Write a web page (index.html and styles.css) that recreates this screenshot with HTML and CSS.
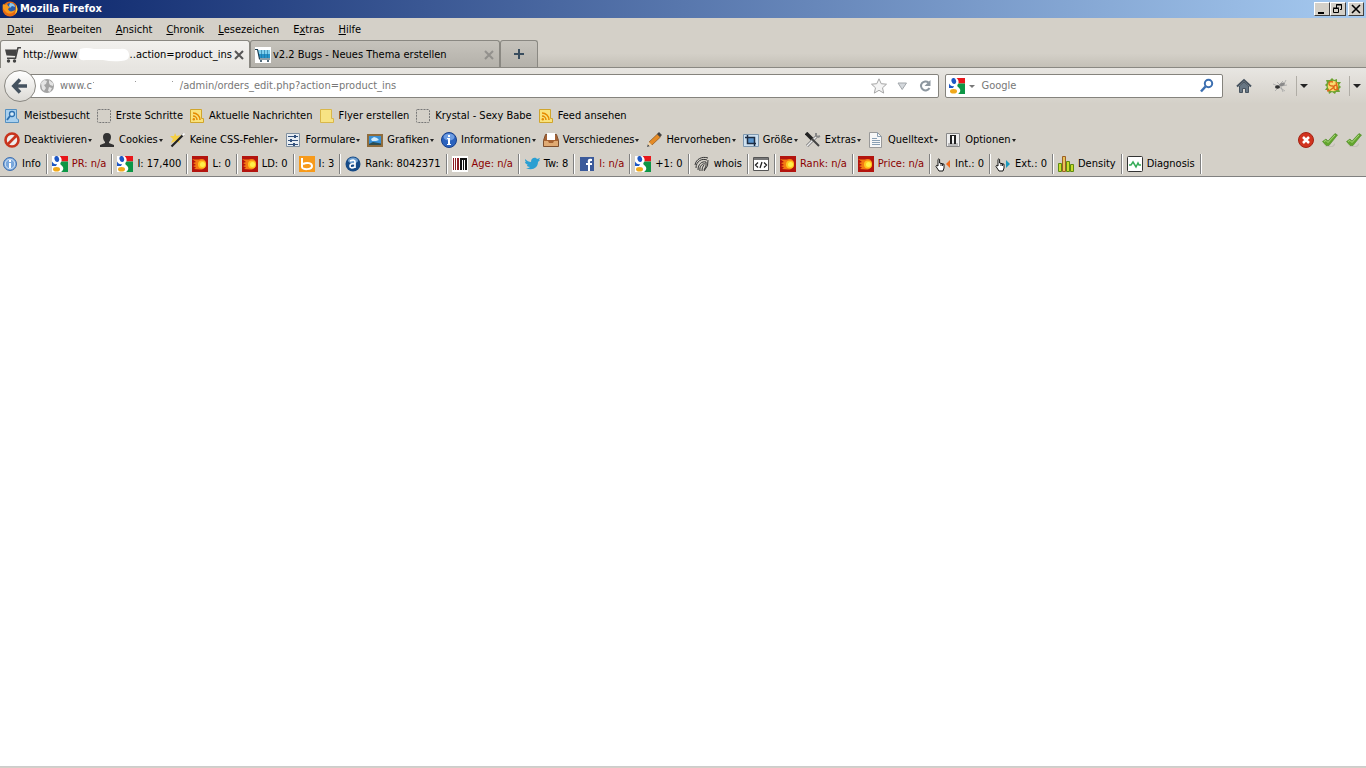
FILE: index.html
```html
<!DOCTYPE html>
<html lang="de">
<head>
  <meta charset="UTF-8">
  <title>Mozilla Firefox</title>
  <link rel="stylesheet" href="styles.css">
</head>
<body>
<!-- Icons, die mehrfach vorkommen -->
<svg class="sprite" aria-hidden="true">
  <symbol id="google" viewBox="0 0 16 16">
    <path fill="#fff" d="M0 0h16v16H0z"/>
    <path fill="#e8161a" d="M7.500 0H16v5.500H9.500C10 3 9 1 7.500 0z"/>
    <path fill="#0d9646" d="M9.500 5.500H16V16H9c3-2 3-5 0-7-1-1-1-2 .5-3.500z"/>
    <path fill="#1d57c4" d="M0 5.500C1 7.500 3 8.500 5 8L4 10H0z"/>
    <ellipse cx="4.800" cy="3" rx="2.300" ry="3" transform="rotate(-15 4.800 3)" fill="#1d57c4"/>
    <ellipse cx="4.500" cy="13.300" rx="3.500" ry="2.300" fill="#f0a91b"/>
  </symbol>
  <symbol id="comet" viewBox="0 0 16 16">
    <path fill="#b3140e" d="M0 0h16v16H0z"/>
    <path fill="#f47a12" d="M0 3q5 1 9 0c4 0 5 2 5 5s-2 6-6 5.500L2 13l2-1.500L1 10l3-1-3-2 3-1z"/>
    <circle cx="10" cy="8.500" r="4" fill="#ffc51e"/>
    <circle cx="10.500" cy="8.500" r="2.500" fill="#fff04a"/>
  </symbol>
  <symbol id="feed" viewBox="0 0 16 16">
    <path fill="#f9e27c" stroke="#d0a52c" d="M1.500 1.500h11v9h2v4h-13z"/>
    <g fill="none" stroke="#e58a00" stroke-width="1.500"><path d="M4 8a4 4 0 0 1 4 4M4 5a7 7 0 0 1 7 7"/></g>
    <circle cx="4.800" cy="11.200" r="1.200" fill="#e58a00"/>
  </symbol>
  <symbol id="blank" viewBox="0 0 16 16">
    <rect x="1.500" y="1.500" width="13" height="13" rx="1" fill="none" stroke="#777" stroke-dasharray="2 1"/>
  </symbol>
  <symbol id="check" viewBox="0 0 16 16">
    <path fill="#c3c0b8" d="M3 14h7l3-3v2l-2 2H4z"/>
    <path fill="#62a52d" stroke="#4b8a25" stroke-width=".6" d="M.5 9.500L4 7l2 2 7-7.500L15.500 3 7 13.500H4z"/>
    <path fill="none" stroke="#a9d67c" d="M2 9.500L4 8.500l2 2 7-7.500"/>
  </symbol>
  <symbol id="hand" viewBox="0 0 10 16">
    <path fill="#fff" stroke="#000" stroke-width=".9" d="M3 9V3.500q.8-1.200 1.600 0V7L9 8.200V12l-1 3H4L1 10.500Q1 8.500 3 10z"/>
    <path stroke="#000" stroke-width=".8" d="M6 7.500V10M7.500 8v2"/>
  </symbol>
</svg>

<header class="titlebar">
  <svg class="icon" viewBox="0 0 16 16">
    <circle cx="8" cy="8" r="7.500" fill="#e66a12"/>
    <circle cx="8.500" cy="7" r="5" fill="#2a5caa"/>
    <path fill="#8fc7ea" d="M8 2c3 0 5 2 5 4l-3-1-2 2-1-2z"/>
    <path fill="#f79a1e" d="M1 3l2 1 2-1 1 2 2 1-2 2c1 3 4 3 7 1-1 4-7 5-10 1C1 8 0 6 1 3z"/>
    <path fill="#ffd23a" d="M14 4c2 3 2 7-1 9l1-4z"/>
  </svg>
  <span class="caption">Mozilla Firefox</span>
  <button class="win" aria-label="Minimieren"><svg viewBox="0 0 14 12"><path d="M3 9h6v2H3z"/></svg></button>
  <button class="win" aria-label="Wiederherstellen"><svg viewBox="0 0 14 12"><path fill="none" stroke="#000" d="M5.500 5V1.500h5v5H9M5 2h6M2.500 5.500h5v4h-5zM2 5h6"/></svg></button>
  <button class="win win-close" aria-label="Schließen"><svg viewBox="0 0 14 12"><path fill="none" stroke="#000" stroke-width="1.600" d="M3 2l8 8M11 2l-8 8"/></svg></button>
</header>

<nav class="menubar">
  <button><u>D</u>atei</button>
  <button><u>B</u>earbeiten</button>
  <button><u>A</u>nsicht</button>
  <button><u>C</u>hronik</button>
  <button><u>L</u>esezeichen</button>
  <button>E<u>x</u>tras</button>
  <button><u>H</u>ilfe</button>
</nav>

<div class="tabs">
  <div class="tab active">
    <svg class="icon" viewBox="0 0 16 16"><path fill="#444" d="M0 2.500h12L10.800 9 1.500 8.500z"/><path fill="none" stroke="#444" stroke-width="1.500" d="M16 .8h-3L10.500 11.200H2"/><circle cx="3.500" cy="14" r="1.700" fill="#444"/><circle cx="9.500" cy="14" r="1.700" fill="#444"/></svg>
    <span class="tab-label">http://www<svg class="blob" viewBox="0 0 52 14"><path fill="#fff" d="M2 1q6-2 14 0h26q8-1 9 5 1 7-8 7-9 1-18-1H8Q0 13 1 8z"/></svg>..action=product_ins</span>
    <button class="close" aria-label="Tab schließen"><svg viewBox="0 0 10 10"><path d="M1 1l8 8M9 1L1 9"/></svg></button>
  </div>
  <div class="tab">
    <svg class="icon" viewBox="0 0 16 16"><path fill="#fff" d="M0 0h16v16H0z"/><path fill="#7fd0ee" d="M3 3h12v4H3z"/><path fill="#2492c9" d="M3.500 7H15v4H4.500z"/><path stroke="#1f6f9a" stroke-width=".6" d="M6.500 3v8M9.500 3v8M12.500 3v8"/><path fill="none" stroke="#1b3c50" stroke-width="1.200" d="M0 2.500h2.500L4.500 12H15"/><circle cx="6" cy="14" r="1" fill="#1b3c50"/><circle cx="13" cy="14" r="1" fill="#1b3c50"/></svg>
    <span class="tab-label">v2.2 Bugs - Neues Thema erstellen</span>
    <button class="close" aria-label="Tab schließen"><svg viewBox="0 0 10 10"><path d="M1 1l8 8M9 1L1 9"/></svg></button>
  </div>
  <button class="new-tab" aria-label="Neuer Tab"><svg viewBox="0 0 12 12"><path stroke="#394d5e" stroke-width="2" d="M6 1v10M1 6h10"/></svg></button>
</div>

<div class="navbar">
  <button class="back" aria-label="Zurück"><svg viewBox="0 0 18 16"><path fill="none" stroke="#44525f" stroke-width="3.500" d="M9 1.500L2.800 8 9 14.500M3 8h13"/></svg></button>
  <div class="field urlbar">
    <svg class="icon" viewBox="0 0 16 16"><circle cx="8" cy="8" r="7" fill="#a3a3a3"/><path fill="#e4e4e4" d="M2 5l3-3 3 1-1 3-2 1 2 3-2 3-2-2zM10 2l4 3v3l-3-1-1-2zM10 9l3 1-2 4-2-1z"/></svg>
    <input class="url" type="text" aria-label="Adresse" value="www.c                            /admin/orders_edit.php?action=product_ins">
    <svg class="marks" viewBox="0 0 90 12"><path fill="#999" d="M4 1h1v1H4zM46 0h1v1h-1zM83 0h1v1h-1z"/></svg>
    <button class="tool" aria-label="Lesezeichen setzen"><svg class="icon" viewBox="0 0 16 16"><path fill="#f4f4f4" stroke="#a5a5a5" d="M8 .8l2.200 4.900 5.300.5-4 3.600 1.200 5.300L8 12.300l-4.700 2.800 1.200-5.300-4-3.600 5.300-.5z"/></svg></button>
    <button class="tool" aria-label="Verlauf"><svg class="icon" viewBox="0 0 16 16"><path fill="#d4d8dc" stroke="#a3a8ac" d="M4 5h8.500L8.200 11.500z"/></svg></button>
    <button class="tool" aria-label="Neu laden"><svg class="icon" viewBox="0 0 16 16"><path fill="none" stroke="#8d979f" stroke-width="2" d="M11.500 4.500A4.500 4.500 0 1 0 12.500 10"/><path fill="#8d979f" d="M13.500 2v6h-6z"/></svg></button>
  </div>
  <div class="field searchbar">
    <button class="engine" aria-label="Suchmaschine"><svg class="icon"><use href="#google"/></svg><i class="arrow"></i></button>
    <input class="search" type="text" aria-label="Suche" placeholder="Google">
    <button class="tool" aria-label="Suchen"><svg class="icon" viewBox="0 0 16 16"><circle cx="9.500" cy="5.500" r="3.700" fill="none" stroke="#3c6fb0" stroke-width="2"/><path stroke="#3c6fb0" stroke-width="2.500" d="M6.500 8.500L2 13.500"/></svg></button>
  </div>
  <button class="action home" aria-label="Startseite"><svg class="icon" viewBox="0 0 16 16"><path fill="none" stroke="#46535f" stroke-width="2" d="M1 8.500L8 2l7 6.500"/><path fill="#687784" stroke="#46535f" d="M3.500 8L8 4l4.500 4v6.500h-3v-4h-3v4h-3z"/></svg></button>
  <button class="action" aria-label="Firebug"><svg class="icon" viewBox="0 0 16 16"><g stroke="#a5a5a5" fill="none" stroke-width=".8"><path d="M1 6l5 2 5-5M3 13l4-4 6 4M5 4l4 4 6-1M9 9l2 5M12 6l2-4"/></g><ellipse cx="5.500" cy="9" rx="2.500" ry="1.800" fill="#333"/><ellipse cx="10" cy="6.500" rx="3" ry="1.600" fill="#8a8a8a" transform="rotate(-20 10 6.500)"/></svg></button>
  <button class="drop" aria-label="Firebug-Menü"><i class="arrow big"></i></button>
  <button class="action" aria-label="SEO"><svg class="icon" viewBox="0 0 16 16"><path fill="#6da332" d="M7 0l2 2 3-1 0 3 4 0-2 3 2 2-2 2 1 3-4 0-1 2-3-2-3 2-1-4-3 0 2-3-2-2 2-2-1-3 4 0z"/><circle cx="8" cy="8" r="5.300" fill="#f8dc70"/><path fill="none" stroke="#e0681a" stroke-width="1.300" d="M8 4q-4-1-4 1.500T7.500 8 6 11.500 3.500 11M12 8q-3-2-3 1.500T12 11zM11 4l2 8"/></svg></button>
  <button class="drop" aria-label="SEO-Menü"><i class="arrow big"></i></button>
</div>

<nav class="bookmarks">
  <a href="#"><svg class="icon" viewBox="0 0 16 16"><path fill="#a9d0ee" stroke="#5590c0" d="M1.500 1.500h11v9l2 1v3h-13z"/><circle cx="8" cy="6" r="2.500" fill="#d9edfa" stroke="#2d6fae" stroke-width="1.300"/><path stroke="#2d6fae" stroke-width="1.800" d="M6 8l-3 4"/></svg>Meistbesucht</a>
  <a href="#"><svg class="icon"><use href="#blank"/></svg>Erste Schritte</a>
  <a href="#"><svg class="icon"><use href="#feed"/></svg>Aktuelle Nachrichten</a>
  <a href="#"><svg class="icon" viewBox="0 0 16 16"><path fill="#f7e384" stroke="#d9b74a" d="M1.500 1.500h11v9h2v4h-13z"/></svg>Flyer erstellen</a>
  <a href="#"><svg class="icon"><use href="#blank"/></svg>Krystal - Sexy Babe</a>
  <a href="#"><svg class="icon"><use href="#feed"/></svg>Feed ansehen</a>
</nav>

<div class="webdev">
  <button><svg class="icon" viewBox="0 0 16 16"><circle cx="8" cy="8" r="6.500" fill="#eee" stroke="#c8341d" stroke-width="2.600"/><path stroke="#c8341d" stroke-width="2.600" d="M3.500 12.500l9-9"/></svg>Deaktivieren<i class="arrow"></i></button>
  <button><svg class="icon" viewBox="0 0 16 16"><path fill="#333" d="M8 1c3 0 4 2 4 4s-1 4-2 5v1l5 2v2H1v-2l5-2v-1C5 9 4 7 4 5s1-4 4-4z"/></svg>Cookies<i class="arrow"></i></button>
  <button><svg class="icon" viewBox="0 0 16 16"><path fill="#f4cf45" d="M5 1l1.500 3L11 3 8 6.500 10 11 5.500 9 1 11l2-4L0 4l4 0z"/><path stroke="#222" stroke-width="2.200" d="M1.500 14.500L14 2"/><path stroke="#fff" stroke-width="2" d="M12.500 3.500L14.500 1.500"/></svg>Keine CSS-Fehler<i class="arrow"></i></button>
  <button><svg class="icon" viewBox="0 0 16 16"><path fill="#e8edf2" stroke="#8090a0" d="M1.500 1.500h13v13h-13z"/><path fill="none" stroke="#33517c" d="M3 4.500h10M3 8.500h10M3 12.500h10"/><path stroke="#33517c" stroke-width="2" d="M10 3v3M6 7v3M9 11v3"/></svg>Formulare<i class="arrow"></i></button>
  <button><svg class="icon" viewBox="0 0 16 16"><path fill="#3a91d6" stroke="#8f6c3c" stroke-width="2" d="M1 3h14v11H1z"/><path fill="#d4ebfa" d="M4 7l3-2 3 1 2 2-3 1H5z"/><path fill="#2a4d52" d="M2 12l4-2 8 1.500V13H2z"/></svg>Grafiken<i class="arrow"></i></button>
  <button><svg class="icon" viewBox="0 0 16 16"><circle cx="8" cy="8" r="7.500" fill="#2b62bd" stroke="#183f8a"/><ellipse cx="8" cy="5" rx="5.500" ry="3.500" fill="#6e9de2"/><path fill="#fff" d="M7 3h2v2H7zM6 6h3v6h1v1H6v-1h1V7H6z"/></svg>Informationen<i class="arrow"></i></button>
  <button><svg class="icon" viewBox="0 0 16 16"><path fill="#a66232" stroke="#7e4e2c" d="M2.500 2.500h11l2 6v6H.500v-6z"/><path fill="#fff" d="M4 1h8v7H4z"/><path fill="#e0aa73" d="M1 9h4l1 2h4l1-2h4v5H1z"/></svg>Verschiedenes<i class="arrow"></i></button>
  <button><svg class="icon" viewBox="0 0 16 16"><path fill="#e58b26" stroke="#8b531b" stroke-width=".7" d="M3 10L11.500 2l3 3L6 13z"/><path fill="#444" d="M11 2l2-2 3 3-2 2zM1 15l1-3 2 2z"/><path fill="#f3d3a2" d="M3 10l3 3-2.500 1L2 12.500z"/></svg>Hervorheben<i class="arrow"></i></button>
  <button><svg class="icon" viewBox="0 0 16 16"><path fill="#cde0f0" stroke="#7f98af" d="M.500 2.500h15v12H.500z"/><path fill="#5b96ce" d="M5 5h6v6H5z"/><path fill="none" stroke="#1d2d43" stroke-width="1.500" d="M4.500 3v8.500H13M2 5.500h9.500V14"/></svg>Größe<i class="arrow"></i></button>
  <button><svg class="icon" viewBox="0 0 16 16"><path stroke="#777" stroke-width="3" d="M2 14l9-9"/><path stroke="#eee" stroke-width="1.400" d="M2 14l9-9"/><path fill="none" stroke="#888" stroke-width="2" d="M11 1v3l2 1 2-1"/><path stroke="#222" stroke-width="3.500" d="M1 1l6 6"/><path stroke="#444" stroke-width="2" d="M7 7l7 7"/></svg>Extras<i class="arrow"></i></button>
  <button><svg class="icon" viewBox="0 0 16 16"><path fill="#f7f7f7" stroke="#999" d="M1.500.500h8l4 4v11h-12z"/><path fill="none" stroke="#8aa0b4" d="M9.500.500v4h4M4 6.500h5M4 8.500h8M4 10.500h8M4 12.500h8"/></svg>Quelltext<i class="arrow"></i></button>
  <button><svg class="icon" viewBox="0 0 16 16"><path fill="#eee" stroke="#888" d="M1.500 1.500h13v13h-13z"/><path fill="#bbb" d="M3 11h10v3H3z"/><path fill="#222" d="M5 3h6v9H9V8H7v4H5z"/><path fill="#fff" d="M7 4h2v4H7z"/></svg>Optionen<i class="arrow"></i></button>
  <div class="status">
    <svg class="icon" viewBox="0 0 16 16"><circle cx="8" cy="8" r="7.500" fill="#d1331f" stroke="#a32314"/><path stroke="#fff" stroke-width="2.500" d="M5 5l6 6M11 5l-6 6"/></svg>
    <svg class="icon"><use href="#check"/></svg>
    <svg class="icon"><use href="#check"/></svg>
  </div>
</div>

<div class="seobar">
  <button class="info"><svg class="icon" viewBox="0 0 16 16"><circle cx="8" cy="8" r="6.500" fill="#79a7dc" stroke="#3f6fae"/><circle cx="8" cy="8" r="4.800" fill="none" stroke="#d5e5f5"/><path fill="#fff" d="M7 4h2v2H7zM7 7h2v5H7z"/></svg>Info</button>
  <button class="na"><svg class="icon"><use href="#google"/></svg>PR: n/a</button>
  <button><svg class="icon"><use href="#google"/></svg>I: 17,400</button>
  <button><svg class="icon"><use href="#comet"/></svg>L: 0</button>
  <button><svg class="icon"><use href="#comet"/></svg>LD: 0</button>
  <button><svg class="icon" viewBox="0 0 16 16"><path fill="#f79a1b" d="M0 0h16v16H0z"/><path fill="none" stroke="#fff" stroke-width="2" d="M3 2v9c0 3 10 3 10-1 0-3-5-4-9-2"/></svg>I: 3</button>
  <button><svg class="icon" viewBox="0 0 16 16"><circle cx="8" cy="8" r="7.500" fill="#164a86"/><ellipse cx="8" cy="4.500" rx="5" ry="3" fill="#6f9fcf"/><path fill="none" stroke="#fff" stroke-width="1.700" d="M5 5q5-2 5 1v6M10 8q-5-1-5 2t5 1"/></svg>Rank: 8042371</button>
  <button class="na"><svg class="icon" viewBox="0 0 16 16"><path fill="#fff" d="M0 0h16v16H0z"/><path fill="#8d1d22" d="M1 2h1v12H1zM3 2h1v12H3zM5 2h2v12H5z"/><path fill="#111" d="M8 2h2v12H8zM11 2h1v12h-1zM13 2h2v12h-2zM8 2h7v2H8z"/></svg>Age: n/a</button>
  <button><svg class="icon" viewBox="0 0 16 16"><path fill="#2a9fd2" d="M1 3c2 2 4 3 6 3 0-5 5-5 6-3l3-1-1 2 1 0-2 2c0 6-6 9-12 6 2 0 3 0 4-1-2 0-3-1-3-2h1C2 8 1 7 1 6h1C1 5 1 4 1 3z"/></svg>Tw: 8</button>
  <button class="na"><svg class="icon" viewBox="0 0 16 16"><path fill="#3b5a9a" d="M1 1h14v14H1z"/><path fill="#fff" d="M9 15V9H7V7h2c-1-4 1-5 4-4v2c-2 0-2 0-2 2h2v2h-2v6z"/></svg>l: n/a</button>
  <button><svg class="icon"><use href="#google"/></svg>+1: 0</button>
  <button><svg class="icon" viewBox="0 0 16 16"><g fill="none" stroke="#333"><path d="M1 9C2 3 8 0 14 2M2 12C2 5 8 2 13 4M4 14C4 8 8 5 12 6M6 15C5 10 9 7 11 8M8 15c0-3 1-5 2-6M14 4q1 6-4 11M12 6q1 4-2 8"/></g></svg>whois</button>
  <button aria-label="Quelltext"><svg class="icon" viewBox="0 0 16 16"><path fill="#fff" stroke="#555" d="M.500 1.500h15v13H.500z"/><path fill="#777" d="M1 2h14v2H1z"/><path fill="none" stroke="#222" stroke-width="1.300" d="M5 6.500L2.500 9 5 11.500M11 6.500L13.500 9 11 11.500M9 6L7 12"/></svg></button>
  <button class="na"><svg class="icon"><use href="#comet"/></svg>Rank: n/a</button>
  <button class="na"><svg class="icon"><use href="#comet"/></svg>Price: n/a</button>
  <button><svg class="icon" viewBox="0 0 16 16"><use href="#hand" width="10" height="16"/><path fill="#f26a1b" d="M15 4v8l-4-4z"/></svg>Int.: 0</button>
  <button><svg class="icon" viewBox="0 0 16 16"><use href="#hand" width="10" height="16"/><path fill="#1899bd" d="M11 4v8l4-4z"/></svg>Ext.: 0</button>
  <button><svg class="icon" viewBox="0 0 16 16"><g stroke="#5d8a12" fill="#c9dc2c"><path d="M.500 7.500h3v8h-3zM8.500 5.500h3v10h-3zM12.500 8.500h3v7h-3z"/><path fill="#e7c45b" stroke="#9d5f26" d="M4.500.500h3v15h-3z"/></g></svg>Density</button>
  <button><svg class="icon" viewBox="0 0 16 16"><rect x=".5" y=".5" width="15" height="15" rx="1" fill="#fff" stroke="#333"/><path fill="none" stroke="#36ab58" stroke-width="1.500" d="M2 9h2l2-3 3 5 2-4 1 2h2"/></svg>Diagnosis</button>
</div>

<main class="content"></main>
</body>
</html>
```
FILE: styles.css
```css
* {
    box-sizing: border-box;
}

body {
    margin: 0;
    min-height: 100vh;
    display: flex;
    flex-direction: column;
    background: #d4d0c8;
    color: #000;
    font: 11px/14px "DejaVu Sans Condensed", "DejaVu Sans", sans-serif;
}

button, input {
    font: inherit;
    color: inherit;
    margin: 0;
    padding: 0;
    border: 0;
    background: none;
}

button {
    display: flex;
    align-items: center;
    white-space: nowrap;
}

.sprite {
    position: absolute;
    width: 0;
    height: 0;
}

.icon {
    width: 16px;
    height: 16px;
    flex: none;
    display: block;
}

/* kleiner Pfeil nach unten */
.arrow {
    border: 2px solid transparent;
    border-top: 3px solid #222;
    border-bottom: 0;
}

.arrow.big {
    border-width: 4px 4px 0;
}

/* Titelleiste */
.titlebar {
    display: flex;
    align-items: center;
    height: 18px;
    padding: 0 2px;
    background: linear-gradient(to right, #0a246a, #a6caf0);
    color: #fff;
    font-weight: bold;
}

.caption {
    flex: 1;
    padding-left: 2px;
}

.win {
    width: 16px;
    height: 14px;
    background: #d4d0c8;
    border: 1px solid;
    border-color: #fff #404040 #404040 #fff;
}

.win svg {
    width: 14px;
    height: 12px;
}

.win-close {
    margin-left: 2px;
}

.menubar {
    display: flex;
    gap: 14px;
    height: 22px;
    padding: 1px 7px 0;
}

/* Tabs */
.tabs {
    display: flex;
    height: 28px;
    background: linear-gradient(#d4d0c8 50%, #c4c0b7);
    border-bottom: 1px solid #8a8882;
}

.tab, .new-tab {
    border: 1px solid #8a8882;
    border-bottom: 0;
    border-radius: 3px 3px 0 0;
    background: linear-gradient(#c6c3bc, #b4b1aa);
}

.tab {
    display: flex;
    align-items: center;
    gap: 2px;
    width: 250px;
    padding: 1px 5px 0 4px;
}

.tab.active {
    margin-bottom: -1px;
    background: linear-gradient(#f2f1ee, #e7e5e1);
}

.tab-label {
    flex: 1;
    display: flex;
    align-items: center;
    white-space: nowrap;
}

.blob {
    width: 52px;
    height: 14px;
}

.close {
    width: 10px;
    height: 10px;
    opacity: .4;
}

.active .close {
    opacity: 1;
}

.close svg {
    fill: none;
    stroke: #555;
    stroke-width: 2;
}

.new-tab {
    justify-content: center;
    width: 38px;
}

.new-tab svg {
    width: 12px;
}

/* Navigation */
.navbar {
    display: flex;
    align-items: center;
    height: 36px;
    padding-left: 4px;
    background: linear-gradient(#e8e6e2, #d4d0c8);
}

.back {
    justify-content: center;
    width: 32px;
    height: 32px;
    border: 1px solid #8a8882;
    border-radius: 50%;
    background: linear-gradient(#fff, #dcdad5);
    z-index: 1;
}

.back svg {
    width: 18px;
    height: 16px;
}

.field {
    display: flex;
    align-items: center;
    height: 24px;
    background: #fff;
    border: 1px solid #85837d;
    border-radius: 2px;
    color: #777;
}

.urlbar {
    position: relative;
    flex: 10;
    margin-left: -8px;
    padding-left: 10px;
    padding-right: 1px;
}

.url {
    flex: 1;
    min-width: 0;
    padding-left: 5px;
}

/* Reste des geschwärzten Hostnamens */
.marks {
    position: absolute;
    left: 60px;
    top: 6px;
    width: 90px;
    height: 12px;
}

.tool {
    padding: 0 4px 0 3px;
}

.searchbar {
    flex: 3;
    margin: 0 6px;
    padding: 0 3px;
}

.engine {
    gap: 4px;
}

.engine .arrow {
    border-width: 3px 3px 0;
    border-top-color: #777;
}

.search {
    flex: 1;
    min-width: 0;
    padding-left: 6px;
}

.search::placeholder {
    color: #777;
    opacity: 1;
}

.action {
    padding: 0 8px 0 12px;
}

.home {
    padding-left: 7px;
}

.drop {
    height: 20px;
    padding: 0 5px 0 3px;
    border-left: 1px solid #b0ada6;
}

/* Symbolleisten */
.bookmarks, .webdev {
    display: flex;
    align-items: center;
    height: 24px;
    padding: 0 4px;
}

.bookmarks {
    gap: 6px;
}

.webdev {
    gap: 7px;
}

.bookmarks a, .webdev button {
    display: flex;
    align-items: center;
    gap: 4px;
    color: #000;
    text-decoration: none;
    white-space: nowrap;
}

.webdev .arrow {
    margin-left: -3px;
}

.status {
    display: flex;
    gap: 8px;
    margin-left: auto;
}

.seobar {
    display: flex;
    height: 25px;
    padding: 2px 0;
    border-bottom: 1px solid #808080;
}

.seobar button {
    gap: 4px;
    padding: 0 5px;
    border-right: 1px solid #808080;
    box-shadow: 1px 0 #fff;
}

.seobar .info {
    padding-left: 2px;
}

.seobar .na {
    color: #8b0000;
}

.content {
    flex: 1;
    background: #fff;
    border-bottom: 1px solid #ccc;
    margin-bottom: 1px;
}
```
